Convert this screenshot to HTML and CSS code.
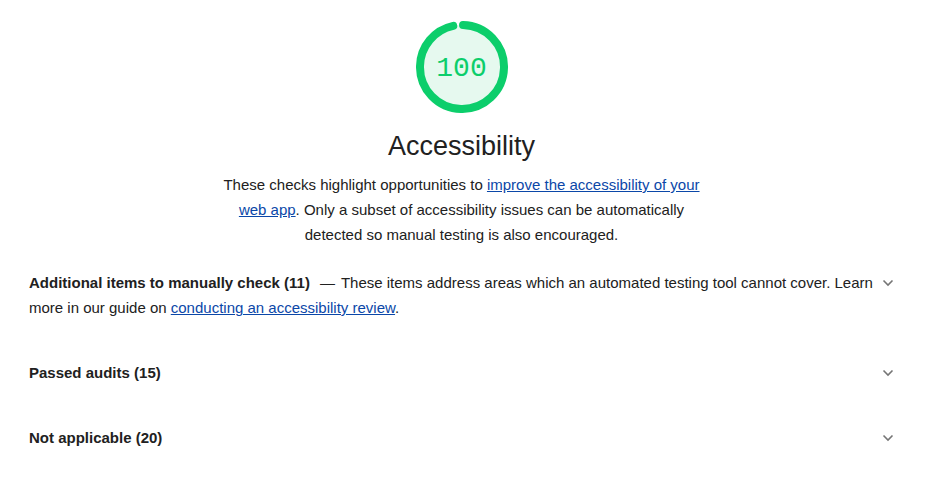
FILE: index.html
```html
<!DOCTYPE html>
<html>
<head>
<meta charset="utf-8">
<link rel="stylesheet" href="styles.css">
</head>
<body>
<div class="category">
  <div class="header">
    <div class="gauge">
      <svg class="gauge-svg" viewBox="0 0 92 92" width="92" height="92">
        <circle class="gauge-base" cx="46" cy="46" r="42"></circle>
        <circle class="gauge-arc" cx="46" cy="46" r="42" transform="rotate(-88.6 46 46)"></circle>
      </svg>
      <div class="gauge-value">100</div>
    </div>
    <div class="title">Accessibility</div>
    <div class="description">These checks highlight opportunities to <a href="#">improve the accessibility of your web app</a>. Only a subset of accessibility issues can be automatically detected so manual testing is also encouraged.</div>
  </div>
  <div class="group group-manual">
    <div class="group-text"><span class="group-title">Additional items to manually check (11)</span><span class="sep">—</span>These items address areas which an automated testing tool cannot cover. Learn more in our guide on <a href="#">conducting an accessibility review</a>.</div>
    <svg class="chevron" viewBox="0 0 12 8" width="12" height="8"><path d="M1.5 1.5 L6 6 L10.5 1.5"></path></svg>
  </div>
  <div class="group">
    <div class="group-text"><span class="group-title">Passed audits (15)</span></div>
    <svg class="chevron" viewBox="0 0 12 8" width="12" height="8"><path d="M1.5 1.5 L6 6 L10.5 1.5"></path></svg>
  </div>
  <div class="group">
    <div class="group-text"><span class="group-title">Not applicable (20)</span></div>
    <svg class="chevron" viewBox="0 0 12 8" width="12" height="8"><path d="M1.5 1.5 L6 6 L10.5 1.5"></path></svg>
  </div>
</div>
</body>
</html>
```
FILE: styles.css
```css
html, body {
  margin: 0;
  padding: 0;
  background: #ffffff;
}
body {
  font-family: "Liberation Sans", Arial, sans-serif;
  color: #212121;
}
a {
  color: #0b47a8;
  text-decoration: underline;
}
.category {
  padding: 21px 41px 0 29px;
}
.header {
  display: flex;
  flex-direction: column;
  align-items: center;
}
.gauge {
  position: relative;
  width: 92px;
  height: 92px;
}
.gauge-svg {
  display: block;
}
.gauge-base {
  fill: #e6f9ef;
  stroke: none;
}
.gauge-arc {
  fill: none;
  stroke: #0cce6b;
  stroke-width: 8;
  stroke-linecap: round;
  stroke-dasharray: 253.6 300;
}
.gauge-value {
  position: absolute;
  inset: 0;
  display: flex;
  align-items: center;
  justify-content: center;
  font-family: "Liberation Mono", "DejaVu Sans Mono", monospace;
  font-size: 28px;
  color: #0cce6b;
  padding-top: 2px;
}
.title {
  margin-top: 16px;
  font-size: 27px;
  line-height: 34px;
  color: #212121;
}
.description {
  margin-top: 9px;
  width: 480px;
  text-align: center;
  font-size: 15px;
  line-height: 25px;
}
.group {
  display: flex;
  align-items: flex-start;
  justify-content: space-between;
  gap: 4px;
  height: 65px;
  font-size: 15px;
  line-height: 25px;
}
.group-manual {
  margin-top: 23px;
  height: 90px;
}
.group-text {
  flex: 1;
}
.group-title {
  font-weight: bold;
}
.sep {
  margin: 0 6px 0 10px;
}
.chevron {
  flex: none;
  margin-top: 9px;
  fill: none;
  stroke: #757575;
  stroke-width: 1.6;
}
```
